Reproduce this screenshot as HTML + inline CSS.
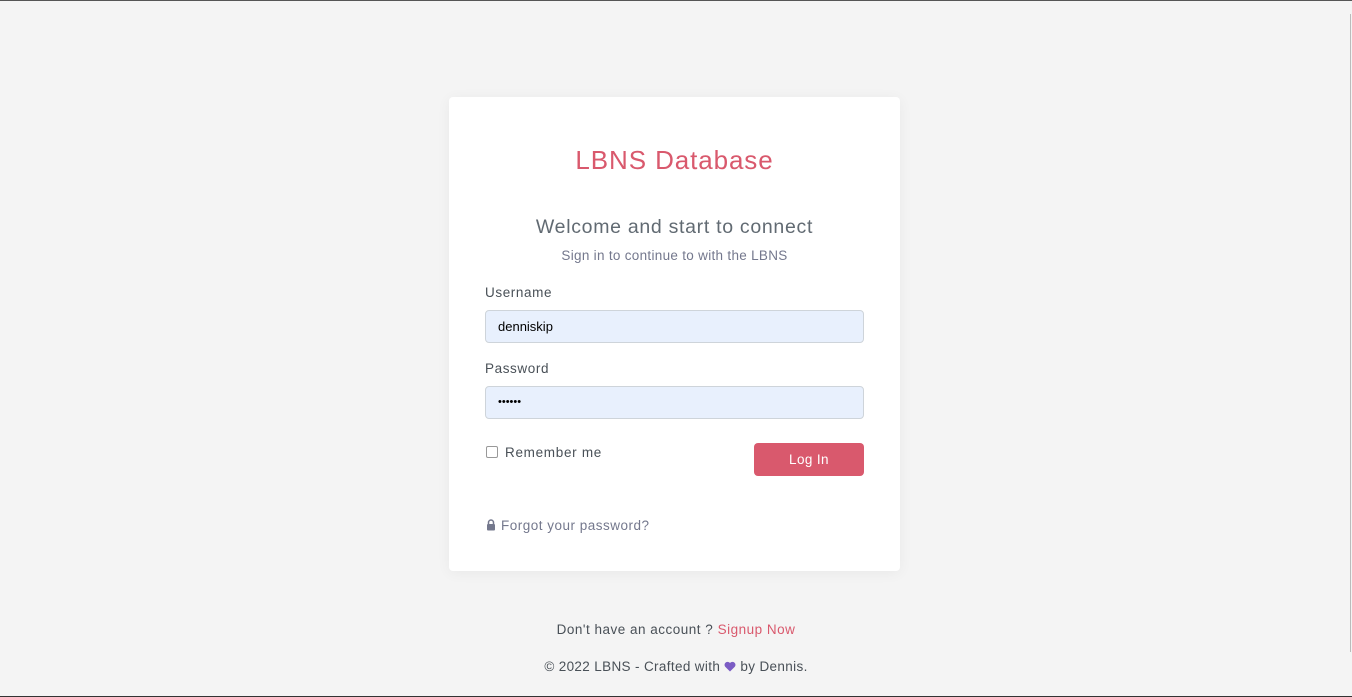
<!DOCTYPE html>
<html><head><meta charset="utf-8">
<style>
*{box-sizing:border-box;margin:0;padding:0}
html,body{width:1352px;height:697px;overflow:hidden}
body{background:#f4f4f4;font-family:"Liberation Sans",sans-serif;position:relative;color:#495057}
.topline{position:absolute;left:0;top:0;width:1352px;height:1px;background:#555}
.botline{position:absolute;left:0;bottom:0;width:1352px;height:1px;background:#333}
.rline{position:absolute;left:1350px;top:14px;width:1px;height:638px;background:#bbb}
.card{position:absolute;left:449px;top:97px;width:451px;height:474px;background:#fff;border-radius:4px;box-shadow:0 2px 14px rgba(0,0,0,0.05)}
.t1{position:absolute;top:48px;width:100%;text-align:center;color:#d9596d;font-size:26px;letter-spacing:0.9px}
.t2{position:absolute;top:119px;width:100%;text-align:center;color:#616a72;font-size:19.5px;letter-spacing:0.7px}
.t3{position:absolute;top:151px;width:100%;text-align:center;color:#74788d;font-size:13.5px;letter-spacing:0.3px}
.lbl{position:absolute;left:36px;font-size:13.5px;color:#495057;letter-spacing:0.6px}
.inp{position:absolute;left:36px;width:379px;height:33px;background:#e8f0fd;border:1px solid #ced4da;border-radius:4px;font-size:13px;color:#000;padding:8px 12px}
.chk{position:absolute;left:37px;top:349px;width:12px;height:12px;border:1px solid #999;border-radius:2px;background:#fff}
.rem{position:absolute;left:56px;top:348px;font-size:13.5px;color:#495057;letter-spacing:0.7px}
.btn{position:absolute;left:305px;top:346px;width:110px;height:33px;background:#d9596d;border-radius:4px;color:#fff;font-size:13.5px;text-align:center;line-height:33px;letter-spacing:0.4px}
.fg{position:absolute;left:37px;top:421px;font-size:13.5px;color:#74788d;letter-spacing:0.5px}
.f1{position:absolute;top:622px;width:100%;text-align:center;font-size:13.5px;color:#495057;letter-spacing:0.5px}
.f2{position:absolute;top:659px;width:100%;text-align:center;font-size:13.5px;color:#495057;letter-spacing:0.35px}
</style></head><body>
<div class="topline"></div><div class="rline"></div><div class="botline"></div>
<div class="card">
<div class="t1">LBNS Database</div>
<div class="t2">Welcome and start to connect</div>
<div class="t3">Sign in to continue to with the LBNS</div>
<div class="lbl" style="top:188px">Username</div>
<div class="inp" style="top:213px">denniskip</div>
<div class="lbl" style="top:264px">Password</div>
<div class="inp" style="top:289px;font-size:11px;padding-top:9px">••••••</div>
<div class="chk"></div>
<div class="rem">Remember me</div>
<div class="btn">Log In</div>
<div class="fg"><svg width="10" height="12" viewBox="0 0 10 12" style="vertical-align:-1px;margin-right:5px"><path d="M2.5 5V3.5a2.5 2.5 0 0 1 5 0V5" fill="none" stroke="#74788d" stroke-width="1.5"/><rect x="1" y="5" width="8" height="6.5" rx="1" fill="#74788d"/></svg>Forgot your password?</div>
</div>
<div class="f1">Don't have an account ? <span style="color:#d9596d">Signup Now</span></div>
<div class="f2">© 2022 LBNS - Crafted with <svg width="12" height="11" viewBox="0 0 12 11" style="vertical-align:-1px"><path d="M6 10.5L1.2 5.8A3 3 0 0 1 6 2a3 3 0 0 1 4.8 3.8z" fill="#7b5cc4"/></svg> by Dennis.</div>
</body></html>
